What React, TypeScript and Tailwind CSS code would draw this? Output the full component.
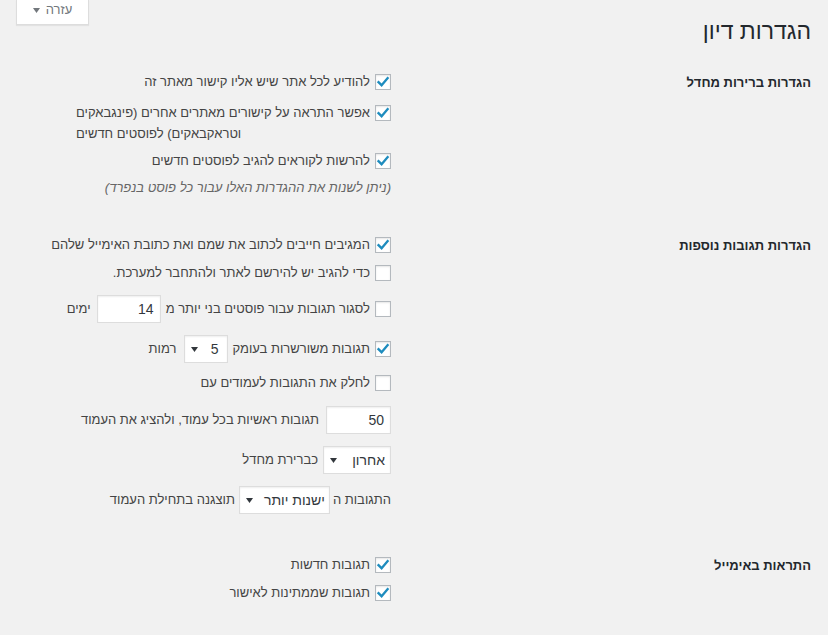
import React from "react";

const Box = ({ checked }: { checked?: boolean }) => (
  <span className="w-4 h-4 shrink-0 border border-[#b4b9be] bg-white shadow-[inset_0_1px_2px_rgba(0,0,0,0.1)] flex items-center justify-center">
    {checked && (
      <svg width="14" height="14" viewBox="0 0 14 14">
        <path d="M2.5 7.2 L5.6 10.2 L11.6 3.2" fill="none" stroke="#1e8cbe" strokeWidth="2.3" strokeLinecap="square" />
      </svg>
    )}
  </span>
);

const Arrow = () => (
  <svg width="7" height="5" viewBox="0 0 7 5" className="shrink-0">
    <polygon points="0,0 7,0 3.5,5" fill="#32373c" />
  </svg>
);

const Field = ({ value, w }: { value: string; w: string }) => (
  <div className={`${w} h-[28px] shrink-0 bg-white border border-[#ddd] shadow-[inset_0_1px_2px_rgba(0,0,0,0.07)] flex items-center pr-[6px] text-[14px] text-[#32373c]`}>
    {value}
  </div>
);

const Select = ({ value, w, pr }: { value: string; w: string; pr: string }) => (
  <div className={`${w} ${pr} h-[28px] shrink-0 bg-white border border-[#ddd] shadow-[inset_0_1px_2px_rgba(0,0,0,0.07)] flex items-center justify-between pl-[6px] text-[14px] text-[#32373c]`}>
    <span>{value}</span>
    <Arrow />
  </div>
);

const Label = ({ children }: { children: React.ReactNode }) => (
  <div className="w-[420px] shrink-0 h-[20px] pt-[2px] flex items-center text-[13px] font-bold text-[#23282d]">{children}</div>
);

export default function App() {
  return (
    <div dir="rtl" className="w-[828px] h-[635px] overflow-hidden bg-[#f1f1f1] font-['Liberation_Sans',Arial,sans-serif] text-[13px] text-[#444] pr-[17px]">
      <div className="flex items-start">
        <h1 className="mt-[17px] text-[23px] leading-[29px] text-[#23282d] font-normal">הגדרות דיון</h1>
        <div className="ms-auto ml-[16px] w-[73px] h-[25px] bg-white border border-t-0 border-[#ddd] shadow-[0_1px_1px_rgba(0,0,0,0.06)] flex items-center justify-center gap-[6px] pb-[4px] text-[13px] text-[#72777c]">
          <span>עזרה</span>
          <svg width="7" height="5" viewBox="0 0 7 5">
            <polygon points="0,0 7,0 3.5,5" fill="#72777c" />
          </svg>
        </div>
      </div>

      {/* Default settings */}
      <div className="flex mt-[26px]">
        <Label>הגדרות ברירות מחדל</Label>
        <div className="flex flex-col items-start">
          <div className="flex items-center gap-[5px] h-[20px]">
            <Box checked />
            <span>להודיע לכל אתר שיש אליו קישור מאתר זה</span>
          </div>
          <div className="flex items-start gap-[5px] mt-[10px]">
            <span className="mt-[3px]"><Box checked /></span>
            <span className="leading-[21px] text-left">
              אפשר התראה על קישורים מאתרים אחרים (פינגבאקים
              <br />
              וטראקבאקים) לפוסטים חדשים
            </span>
          </div>
          <div className="flex items-center gap-[5px] h-[20px] mt-[7px]">
            <Box checked />
            <span>להרשות לקוראים להגיב לפוסטים חדשים</span>
          </div>
          <div className="flex items-center h-[20px] mt-[7px] italic text-[#666]">
            (ניתן לשנות את ההגדרות האלו עבור כל פוסט בנפרד)
          </div>
        </div>
      </div>

      {/* Other comment settings */}
      <div className="flex mt-[37px]">
        <Label>הגדרות תגובות נוספות</Label>
        <div className="flex flex-col items-start">
          <div className="flex items-center gap-[5px] h-[20px]">
            <Box checked />
            <span>המגיבים חייבים לכתוב את שמם ואת כתובת האימייל שלהם</span>
          </div>
          <div className="flex items-center gap-[5px] h-[20px] mt-[8px]">
            <Box />
            <span>כדי להגיב יש להירשם לאתר ולהתחבר למערכת.</span>
          </div>
          <div className="flex items-center h-[28px] mt-[12px]">
            <Box />
            <span className="mr-[5px] ml-[5px]">לסגור תגובות עבור פוסטים בני יותר מ</span>
            <Field value="14" w="w-[64px]" />
            <span className="mr-[6px]">ימים</span>
          </div>
          <div className="flex items-center h-[28px] mt-[12px]">
            <Box checked />
            <span className="mr-[5px] ml-[4px]">תגובות משורשרות בעומק</span>
            <Select value="5" w="w-[44px]" pr="pr-[9px]" />
            <span className="mr-[8px]">רמות</span>
          </div>
          <div className="flex items-center gap-[5px] h-[20px] mt-[10px]">
            <Box />
            <span>לחלק את התגובות לעמודים עם</span>
          </div>
          <div className="flex items-center h-[28px] mt-[13px]">
            <Field value="50" w="w-[65px]" />
            <span className="mr-[7px]">תגובות ראשיות בכל עמוד, ולהציג את העמוד</span>
          </div>
          <div className="flex items-center h-[28px] mt-[12px]">
            <Select value="אחרון" w="w-[68px]" pr="pr-[5px]" />
            <span className="mr-[5px]">כברירת מחדל</span>
          </div>
          <div className="flex items-center h-[28px] mt-[12px]">
            <span className="ml-[3px]">התגובות ה</span>
            <Select value="ישנות יותר" w="w-[91px]" pr="pr-[4px]" />
            <span className="mr-[4px]">תוצגנה בתחילת העמוד</span>
          </div>
        </div>
      </div>

      {/* Email notifications */}
      <div className="flex mt-[41px]">
        <Label>התראות באימייל</Label>
        <div className="flex flex-col items-start">
          <div className="flex items-center gap-[5px] h-[20px]">
            <Box checked />
            <span>תגובות חדשות</span>
          </div>
          <div className="flex items-center gap-[5px] h-[20px] mt-[8px]">
            <Box checked />
            <span>תגובות שממתינות לאישור</span>
          </div>
        </div>
      </div>
    </div>
  );
}
